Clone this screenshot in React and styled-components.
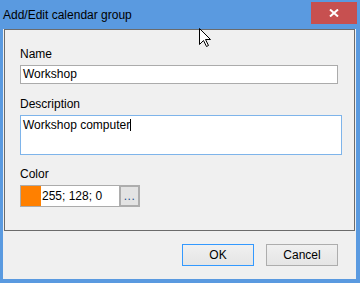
import React from 'react';
import styled, { createGlobalStyle } from 'styled-components';

const GlobalStyle = createGlobalStyle`
	html, body {
		margin: 0;
		padding: 0;
	}
	body {
		font-family: 'Liberation Sans', Arial, sans-serif;
		font-size: 12px;
		color: #000;
	}
`;

const Window = styled.div`
	position: relative;
	width: 360px;
	height: 283px;
	box-sizing: border-box;
	padding: 0 4px 4px 3px;
	background-color: #5a9ae0;
	display: flex;
	flex-direction: column;
	overflow: hidden;
`;

const TitleBar = styled.div`
	height: 29px;
	display: flex;
	align-items: flex-start;
	flex-shrink: 0;
`;

const Title = styled.div`
	flex: 1;
	margin-top: 7px;
	line-height: 16px;
	font-size: 12px;
	color: #000;
`;

const CloseButton = styled.div`
	margin-top: 2px;
	margin-right: -1px;
	width: 46px;
	height: 22px;
	background-color: #c75050;
	display: flex;
	align-items: center;
	justify-content: center;
`;

const Client = styled.div`
	flex: 1;
	background-color: #f0f0f0;
	display: flex;
	flex-direction: column;
`;

const Panel = styled.div`
	margin: 0 1px;
	height: 202px;
	box-sizing: border-box;
	border: 1px solid #6b6b6b;
	padding: 16px 12px 0 15px;
`;

const Field = styled.div`
	margin-top: ${(p) => p.$gap || 0}px;
`;

const Label = styled.div`
	line-height: 16px;
	margin-bottom: 3px;
`;

const TextBox = styled.div`
	width: ${(p) => p.$width}px;
	height: ${(p) => p.$height}px;
	box-sizing: border-box;
	border: 1px solid ${(p) => (p.$focused ? '#7eb4ea' : '#ababab')};
	background-color: #fff;
	padding: ${(p) => (p.$multiline ? '1px 2px' : '0 2px')};
	line-height: ${(p) => (p.$multiline ? '16px' : `${p.$height - 2}px`)};
	white-space: nowrap;
`;

const Caret = styled.span`
	display: inline-block;
	width: 1px;
	height: 12px;
	background-color: #000;
	vertical-align: -2px;
`;

const ColorRow = styled.div`
	display: flex;
	height: 22px;
`;

const ColorInput = styled.div`
	width: 99px;
	box-sizing: border-box;
	border: 1px solid #ababab;
	border-right: none;
	background-color: #fff;
	display: flex;
`;

const Swatch = styled.div`
	width: 20px;
	background-color: ${(p) => p.$color};
`;

const ColorText = styled.div`
	flex: 1;
	padding-left: 1px;
	line-height: 20px;
`;

const DotsButton = styled.div`
	width: 21px;
	box-sizing: border-box;
	border: 2px solid #adadad;
	background-color: #e3e3e3;
	display: flex;
	align-items: flex-end;
	justify-content: center;
	padding-bottom: 3px;
	line-height: 12px;
	letter-spacing: 0.5px;
	color: #1e4e8c;
`;

const Footer = styled.div`
	flex: 1;
	display: flex;
	align-items: center;
	justify-content: flex-end;
	gap: 12px;
	padding-right: 18px;
`;

const Button = styled.div`
	width: 72px;
	height: 22px;
	box-sizing: border-box;
	border: 1px solid ${(p) => (p.$default ? '#3399ff' : '#adadad')};
	background: linear-gradient(#f0f0f0, #e5e5e5);
	display: flex;
	align-items: center;
	justify-content: center;
	line-height: 16px;
`;

const Cursor = styled.svg`
	position: absolute;
	left: 199px;
	top: 28px;
	pointer-events: none;
`;

const App = () => {
	return (
		<>
			<GlobalStyle />
			<Window>
				<TitleBar>
					<Title>Add/Edit calendar group</Title>
					<CloseButton>
						<svg width="10" height="8" viewBox="0 0 10 8">
							<path d="M1 0.5 L9 7.5 M9 0.5 L1 7.5" stroke="#fff" strokeWidth="2" />
						</svg>
					</CloseButton>
				</TitleBar>
				<Client>
					<Panel>
						<Field>
							<Label>Name</Label>
							<TextBox $width={318} $height={19}>Workshop</TextBox>
						</Field>
						<Field $gap={12}>
							<Label>Description</Label>
							<TextBox $width={322} $height={40} $multiline $focused>
								Workshop computer<Caret />
							</TextBox>
						</Field>
						<Field $gap={11}>
							<Label>Color</Label>
							<ColorRow>
								<ColorInput>
									<Swatch $color="#ff8000" />
									<ColorText>255; 128; 0</ColorText>
								</ColorInput>
								<DotsButton>...</DotsButton>
							</ColorRow>
						</Field>
					</Panel>
					<Footer>
						<Button $default>OK</Button>
						<Button>Cancel</Button>
					</Footer>
				</Client>
				<Cursor width="13" height="20" viewBox="0 0 13 20">
					<path
						d="M0.5 0.5 L0.5 16.5 L4.5 12.5 L7.5 18.5 L9.5 17.5 L6.5 11.5 L11.5 11.5 Z"
						fill="#fff"
						stroke="#000"
						strokeWidth="1"
						strokeLinejoin="miter"
					/>
				</Cursor>
			</Window>
		</>
	);
};

export default App;
